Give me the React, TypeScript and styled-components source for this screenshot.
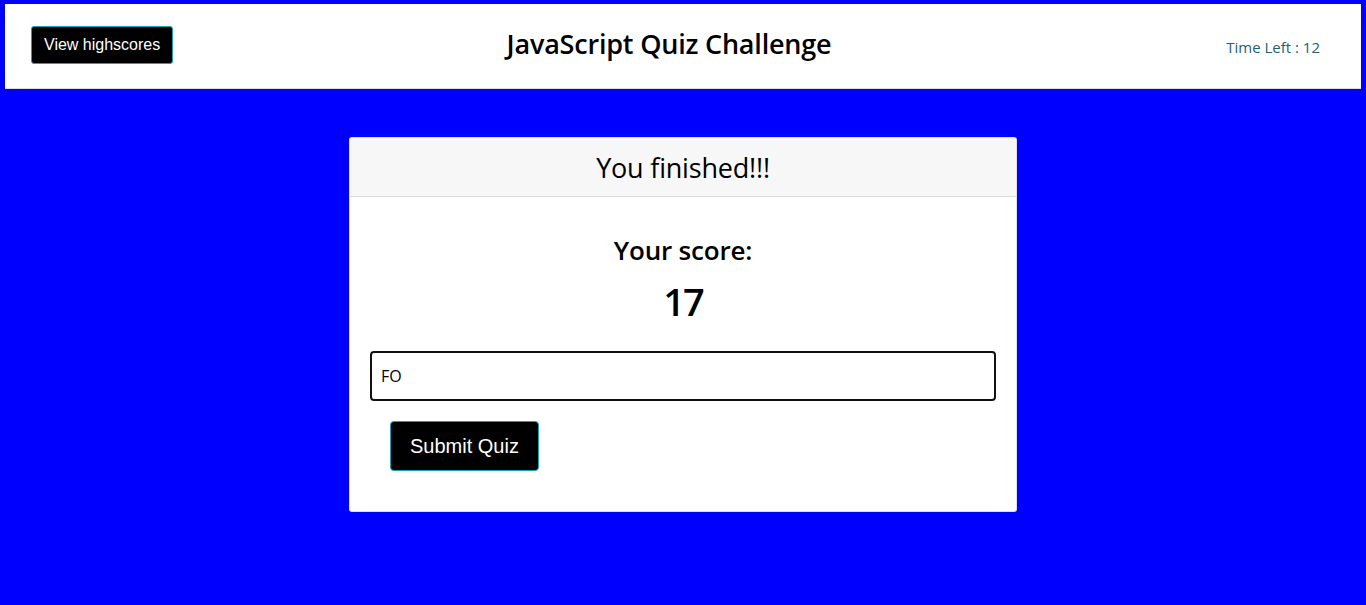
import React from "react";
import styled, { createGlobalStyle } from "styled-components";

const Global = createGlobalStyle`
  html, body { margin: 0; padding: 0; background: #0000ff; }
  body { font-family: "Open Sans", "Noto Sans", sans-serif; color: #000; }
  * { box-sizing: border-box; }
`;

const Page = styled.div`
  min-height: 605px;
  padding: 4px 5px 0 5px;
  display: flex;
  flex-direction: column;
  align-items: stretch;
`;

const Header = styled.header`
  height: 85px;
  background: #fff;
  border-bottom: 1px solid #dcdcdc;
  display: grid;
  grid-template-columns: 1fr auto 1fr;
  align-items: center;
  padding: 0 41px 0 26px;
`;

const DarkButton = styled.button<{ $big?: boolean }>`
  font-family: "Liberation Sans", Arial, sans-serif;
  font-size: ${(p) => (p.$big ? "20px" : "16px")};
  color: #fff;
  background: #000;
  border: 1px solid #17a2b8;
  border-radius: ${(p) => (p.$big ? "4px" : "3px")};
  padding: ${(p) => (p.$big ? "0 19px" : "0 12px")};
  height: ${(p) => (p.$big ? "50px" : "38px")};
  cursor: pointer;
`;

const Left = styled.div`
  display: flex;
  justify-content: flex-start;
  margin-top: -2px;
`;

const Title = styled.h1`
  margin: 0 13px 6px 0;
  font-size: 27px;
  font-weight: 600;
  letter-spacing: -0.2px;
`;

const Timer = styled.div`
  display: flex;
  justify-content: flex-end;
  font-size: 15px;
  color: #1d6276;
  margin-top: 2px;
`;

const Main = styled.main`
  display: flex;
  justify-content: center;
  padding-top: 48px;
`;

const Card = styled.section`
  width: 668px;
  background: #fff;
  border-radius: 3px;
  border: 1px solid rgba(0, 0, 0, 0.125);
  overflow: hidden;
`;

const CardHeader = styled.div`
  height: 59px;
  background: #f7f7f7;
  border-bottom: 1px solid #dcdcdc;
  display: flex;
  align-items: center;
  justify-content: center;
  font-size: 27px;
  font-weight: 400;
  letter-spacing: -0.2px;
  padding-top: 1px;
`;

const CardBody = styled.div`
  padding: 35px 20px 40px 20px;
  display: flex;
  flex-direction: column;
`;

const ScoreLabel = styled.div`
  text-align: center;
  font-size: 26px;
  font-weight: 600;
  line-height: 36px;
  letter-spacing: -0.2px;
`;

const ScoreValue = styled.div`
  text-align: center;
  font-size: 38px;
  font-weight: 600;
  line-height: 50px;
  margin-top: 8px;
  letter-spacing: -2px;
`;

const Input = styled.input`
  margin-top: 25px;
  height: 50px;
  width: 100%;
  border: 2px solid #111;
  border-radius: 4px;
  padding: 0 9px;
  font-family: "Open Sans", sans-serif;
  font-size: 16px;
  color: #000;
  outline: none;
  caret-color: #000;
`;

const Actions = styled.div`
  padding: 20px 0 0 20px;
  display: flex;
`;

export default function App() {
  return (
    <>
      <Global />
      <Page>
        <Header>
          <Left>
            <DarkButton>View highscores</DarkButton>
          </Left>
          <Title>JavaScript Quiz Challenge</Title>
          <Timer>Time Left : 12</Timer>
        </Header>
        <Main>
          <Card>
            <CardHeader>You finished!!!</CardHeader>
            <CardBody>
              <ScoreLabel>Your score:</ScoreLabel>
              <ScoreValue>17</ScoreValue>
              <Input defaultValue="FO" autoFocus />
              <Actions>
                <DarkButton $big>Submit Quiz</DarkButton>
              </Actions>
            </CardBody>
          </Card>
        </Main>
      </Page>
    </>
  );
}
